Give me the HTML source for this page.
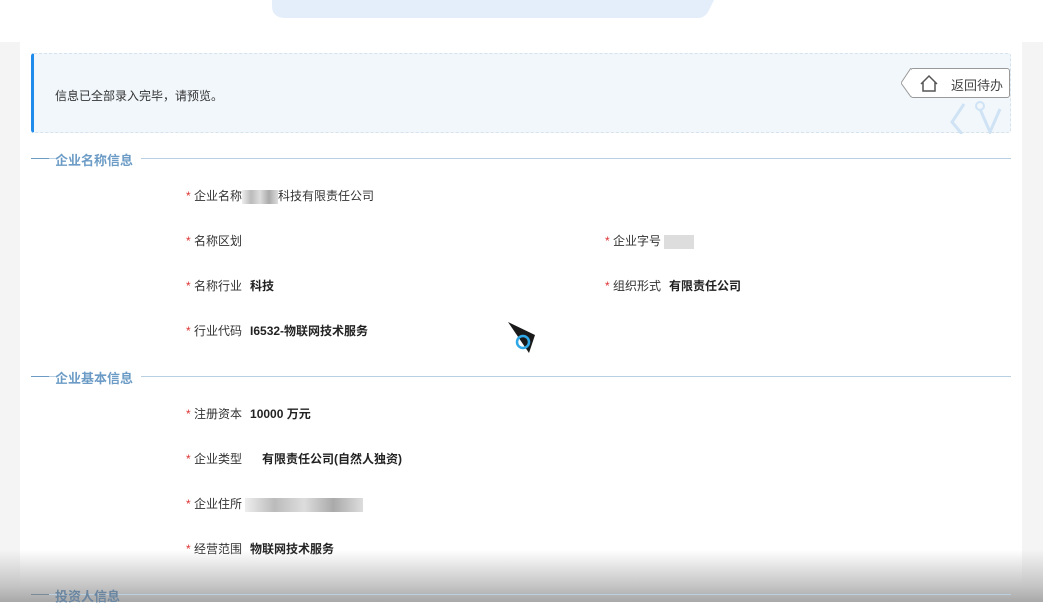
<!DOCTYPE html>
<html><head><meta charset="utf-8"><style>
*{margin:0;padding:0;box-sizing:border-box}
body{width:1043px;height:602px;overflow:hidden;background:#fff;font-family:"Liberation Sans","Noto Sans CJK SC",sans-serif;font-size:12px;color:#333;position:relative}
.bg{position:absolute;left:0;top:42px;width:1043px;height:560px;background:#f4f4f4}
.panel{position:absolute;left:20px;top:42px;width:1002px;height:560px;background:#fff}
.banner{position:absolute;left:31px;top:53px;width:980px;height:80px;background:#f2f7fb;border:1px dashed #d6e2ec;border-left:3px solid #1f8ceb;border-radius:3px}
.banner .t{position:absolute;left:21px;top:33px;font-size:12px;color:#333}
.btn{position:absolute;right:0;top:14px;width:100px;height:30px;border:1px solid #999;border-radius:3px;background:#fff;font-size:13px;color:#444;padding:6px 0 0 40px;white-space:nowrap}
.sec{position:absolute;left:31px;width:980px;height:16px}
.sec span{position:absolute;left:24px;top:0;font-size:13px;font-weight:bold;color:#6c9cc6;background:#fff;padding:0 8px 0 0}
.sec:before{content:"";position:absolute;left:0;right:0;top:8px;border-top:1px solid #b9cfe2}
.sec i{position:absolute;left:0;top:8px;width:18px;border-top:1px solid #6c9cc6}
.f{position:absolute;font-size:12px;color:#333;white-space:nowrap}
.f:before{content:"* ";color:#d33}
.f b{font-weight:bold;color:#222;margin-left:8px}
.blur{display:inline-block;height:14px;vertical-align:middle;background:linear-gradient(90deg,#eee,#bbb,#ddd,#aaa,#ddd);}
.shade{position:absolute;left:0;top:550px;width:1043px;height:52px;background:linear-gradient(#fff0,#c4c4c4 70%,#a8a8a8)}
</style></head><body>
<svg style="position:absolute;left:270px;top:0" width="445" height="20"><path d="M2 0 V6 Q2 18 16 18 H428 Q436 18 440 8 L444 0 Z" fill="#e4eefb"/></svg>
<div class="bg"></div>
<div class="panel"></div>
<div class="banner"><div class="t">信息已全部录入完毕，请预览。</div>
<svg style="position:absolute;right:6px;top:40px" width="60" height="40"><path d="M20 10 L8 28 L18 40 M36 15 L46 38 L56 15" stroke="#cfe3f5" stroke-width="3" fill="none"/><circle cx="36" cy="12" r="4" fill="none" stroke="#cfe3f5" stroke-width="2"/></svg>
<div class="btn"><svg style="position:absolute;left:-10px;top:-1px" width="40" height="30"><path d="M10 0 L0 15 L10 29" stroke="#999" fill="#fff"/><path d="M20 16 L28 8 L36 16 M22 14 V23 H34 V14" stroke="#555" stroke-width="1.5" fill="none"/></svg>返回待办</div>
</div>
<div class="sec" style="top:150px"><i></i><span>企业名称信息</span></div>
<div class="f" style="left:186px;top:187px">企业名称<span class="blur" style="width:36px"></span>科技有限责任公司</div>
<div class="f" style="left:186px;top:232px">名称区划</div>
<div class="f" style="left:605px;top:232px">企业字号 <span class="blur" style="width:30px;background:#ddd"></span></div>
<div class="f" style="left:186px;top:277px">名称行业<b>科技</b></div>
<div class="f" style="left:605px;top:277px">组织形式<b>有限责任公司</b></div>
<div class="f" style="left:186px;top:322px">行业代码<b>I6532-物联网技术服务</b></div>
<div class="sec" style="top:368px"><i></i><span>企业基本信息</span></div>
<div class="f" style="left:186px;top:405px">注册资本<b>10000 万元</b></div>
<div class="f" style="left:186px;top:450px">企业类型<b style="margin-left:20px">有限责任公司(自然人独资)</b></div>
<div class="f" style="left:186px;top:495px">企业住所 <span class="blur" style="width:118px"></span></div>
<div class="f" style="left:186px;top:540px">经营范围<b>物联网技术服务</b></div>
<svg style="position:absolute;left:507px;top:321px" width="30" height="34"><path d="M1 1 L28 14 L22 32 Z" fill="#1a1a1a"/><circle cx="16" cy="21" r="6" fill="none" stroke="#2fa8e8" stroke-width="2.5"/></svg>
<div class="shade"></div>
<div class="sec" style="top:586px"><i style="border-color:#7a8a98"></i><span style="background:none;color:#6a86a0">投资人信息</span></div>
</body></html>
